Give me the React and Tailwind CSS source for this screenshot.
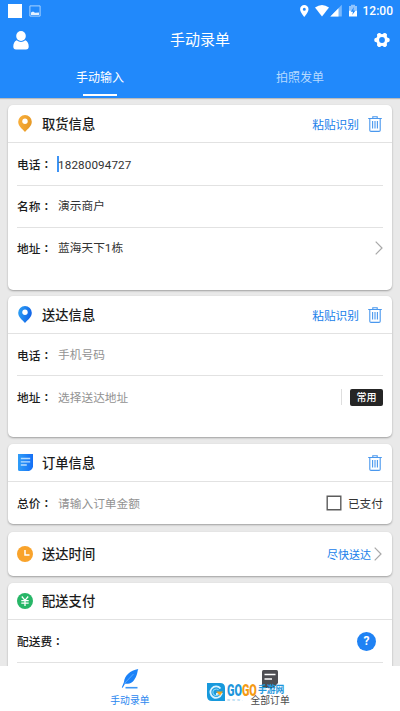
const TrashIcon = () => (
  <svg width="14" height="16" viewBox="0 0 14 16" fill="none" stroke="#4a98ee" strokeWidth="1.1">
    <path d="M.2 2.500h13.600M4.800 2.300V.7h4.400v1.600M1.800 3v11.200q0 1.200 1.200 1.200h8q1.200 0 1.200-1.200V3M4.600 5v7.500M7 5v7.500M9.400 5v7.500" />
  </svg>
);

const ChevronIcon = () => (
  <svg width="8" height="14" viewBox="0 0 8 14" fill="none" stroke="#a8a8a8" strokeWidth="1.2">
    <path d="M.7.7 7 7 .7 13.3" />
  </svg>
);

const PinIcon = ({ id, from, to }) => (
  <svg width="14" height="17" viewBox="0 0 14 17">
    <defs>
      <linearGradient id={id} x1="0" y1="0" x2="1" y2="0.3">
        <stop offset="0" stopColor={from} />
        <stop offset="1" stopColor={to} />
      </linearGradient>
    </defs>
    <path d="M7 0a6.8 6.8 0 0 0-6.8 6.8C.2 11 4 13.700 7 17c3-3.300 6.800-6 6.800-10.200A6.800 6.800 0 0 0 7 0z" fill={`url(#${id})`} />
    <circle cx="7" cy="6.300" r="2.700" fill="#fff" />
  </svg>
);

const OrderIcon = () => (
  <svg width="15" height="17" viewBox="0 0 15 17">
    <defs>
      <linearGradient id="order" x1="0" y1="0" x2="1" y2="0">
        <stop offset="0" stopColor="#2f9df8" />
        <stop offset="1" stopColor="#156ff5" />
      </linearGradient>
    </defs>
    <path d="M0 0h15v12.500q-.5 3-4 4.500H1.500Q0 17 0 15.500z" fill="url(#order)" />
    <path d="M2.800 4.500h9.400M2.800 7.800h9.400M2.800 11h6" stroke="#b9ddff" strokeWidth="1.300" />
  </svg>
);

const ClockIcon = () => (
  <svg width="16" height="16" viewBox="0 0 16 16">
    <circle cx="8" cy="8" r="8" fill="#f9a32b" />
    <path d="M8 4v5h4.500" fill="none" stroke="#fff" strokeWidth="1.500" />
  </svg>
);

const YuanIcon = () => (
  <svg width="16" height="16" viewBox="0 0 16 16">
    <circle cx="8" cy="8" r="8" fill="#27b667" />
    <path d="m4.800 3.500 3.200 3.800 3.200-3.800M4.300 7.700h7.400M4.300 10.200h7.400M8 7.300v5.700" fill="none" stroke="#fff" strokeWidth="1.300" />
  </svg>
);

const GearIcon = () => (
  <svg width="16" height="16" viewBox="0 0 16 16">
    <circle cx="8" cy="8" r="5.900" fill="#fff" />
    <g stroke="#fff" strokeWidth="4.600" strokeLinecap="round">
      <path d="M2.500 8h11" />
      <path d="m5.300 3.300 5.400 9.400" />
      <path d="m10.700 3.300-5.400 9.400" />
    </g>
    <circle cx="8" cy="8" r="2.900" fill="#2189fb" />
  </svg>
);

const UserIcon = () => (
  <svg width="16" height="19" viewBox="0 0 16 19" fill="#fff">
    <ellipse cx="8" cy="5" rx="4.800" ry="5" />
    <path d="M3.600 9.200Q8 12.800 12.400 9.200 15.700 11 15.700 15.500q0 3-2.700 3H3q-2.700 0-2.700-3Q.3 11 3.600 9.200z" />
  </svg>
);

const FeatherIcon = () => (
  <svg width="18" height="20" viewBox="0 0 18 20">
    <path d="M17.300 0C9 1.500 3.500 6.500 3 13L.8 18.600l.9.200L4 14.800c6 .4 8.500-2.300 10-5.300C16.500 6 16.300 2 17.300 0z" fill="#1b82f8" />
    <path d="M3.200 14.700 12.500 5" stroke="#8ac4ff" strokeWidth=".6" />
    <path d="M4.500 18.700h12" stroke="#3d97f5" strokeWidth="1.600" />
  </svg>
);

const AllOrdersIcon = () => (
  <svg width="16" height="18" viewBox="0 0 16 18">
    <path d="M1.500 0h13Q16 0 16 1.500V13l-4.500 5h-10Q0 18 0 16.500v-15Q0 0 1.500 0z" fill="#4d4d52" />
    <path d="M2.500 4.500h11M2.500 9h7.500" stroke="#fff" strokeWidth="1.600" />
  </svg>
);

const StatusIcons = () => (
  <svg width="60" height="14" viewBox="0 0 60 14" fill="#fff">
    <path fillRule="evenodd" d="M4.300 1A4.200 4.200 0 0 0 .1 5.200C.1 8.200 4.300 13 4.300 13s4.200-4.800 4.200-7.800A4.200 4.200 0 0 0 4.300 1zm0 2.700a1.500 1.500 0 1 1 0 3 1.500 1.500 0 0 1 0-3z" />
    <path d="M15 3.600q7-5 14 0l-7 8.900z" />
    <path d="M41.800.800V12.500H30.300z" opacity=".4" />
    <path d="M38.500 4.200v8.300h-8.200z" />
    <path d="M49 2h2V.7h4V2h2v4.500h-8z" opacity=".5" />
    <path d="M49 6.500h8v6h-8z" />
    <path d="m54 3-3.300 4.800H53L52.200 11l3.300-4.500h-2.200z" fill="#2189fb" />
  </svg>
);

const Card = ({ className, children }) => (
  <section className={`rounded-[5px] bg-white shadow-[0_1px_2px_rgba(0,0,0,0.32)] ${className}`}>
    {children}
  </section>
);

const CardHeader = ({ icon, title, className = "h-[38px] border-b", children }) => (
  <div className={`flex items-center border-[#e2e2e2] pr-2.5 pl-[9px] ${className}`}>
    <span className="flex w-4 justify-center">{icon}</span>
    <h2 className="ml-[9px] flex-1 text-[13.3px] font-medium text-[#1c1c1c]">{title}</h2>
    {children}
  </div>
);

const Row = ({ label, value, placeholder, cursor, className = "", children }) => (
  <div className={`mx-[9px] flex items-center border-[#e2e2e2] text-[11.7px] ${className}`}>
    <span className="font-medium text-[#1c1c1c]">
      {label}
      <span className="font-['Noto_Sans_CJK_TC',sans-serif]">：</span>
    </span>
    {cursor && <span className="-mr-px ml-[5px] h-4 w-[1.5px] bg-[#3d93f5]" />}
    <span
      className={`flex-1 pt-[3px] font-['Roboto','Noto_Sans_CJK_SC',sans-serif] ${cursor ? "pl-[0.5px] tracking-[0.1px]" : "ml-1.5"} ${placeholder ? "text-[#929292]" : "text-[#333]"}`}
    >
      {value || placeholder}
    </span>
    {children}
  </div>
);

const PasteAction = () => (
  <span className="mr-[9px] text-[11.7px] text-[#2080ea]">粘贴识别</span>
);

export default function App() {
  return (
    <div className="relative flex h-[711px] w-[400px] flex-col overflow-hidden bg-[#e9e9e9] font-['Noto_Sans_CJK_SC',sans-serif] leading-none">
      <header className="h-[98px] shrink-0 bg-[#2189fb] text-white shadow-[0_1px_1px_rgba(0,0,0,0.2)]">
        <div className="flex h-[22px] items-center pr-[7px] pl-2">
          <span className="h-3.5 w-3.5 bg-white" />
          <svg className="ml-[7px]" width="12" height="12" viewBox="0 0 12 12">
            <path d="M.9.9h10.200v10.200H.9z" fill="none" stroke="#a9d3ff" strokeWidth="1" />
            <path d="M2 10V7.500l2-1 2 1.300 4-.3V10z" fill="#e2f1ff" />
          </svg>
          <div className="ml-auto flex items-center">
            <StatusIcons />
            <span className="ml-[3px] font-['Roboto',sans-serif] text-[12px] font-medium">12:00</span>
          </div>
        </div>
        <div className="flex h-9 items-center justify-between pr-2.5 pl-[13px]">
          <UserIcon />
          <h1 className="mr-[3px] pb-[3px] text-[15px]">手动录单</h1>
          <GearIcon />
        </div>
        <div className="flex h-[38px] text-[12px]">
          <div className="flex flex-1 flex-col items-center justify-between">
            <span className="pt-[13px]">手动输入</span>
            <span className="h-0.5 w-[34px] bg-white" />
          </div>
          <div className="flex flex-1 justify-center pt-[13px] text-[#b5d9ff]">拍照发单</div>
        </div>
      </header>

      <main className="flex min-h-0 flex-1 flex-col overflow-hidden px-2 pt-[7px]">
        <Card className="h-[185px] shrink-0">
          <CardHeader icon={<PinIcon id="pickup" from="#fbb03b" to="#e79a27" />} title="取货信息">
            <PasteAction />
            <TrashIcon />
          </CardHeader>
          <Row label="电话" value="18280094727" cursor className="h-[43px] border-b" />
          <Row label="名称" value="演示商户" className="h-[42px] border-b pb-0.5" />
          <Row label="地址" value="蓝海天下1栋" className="h-[41px] pb-0.5">
            <ChevronIcon />
          </Row>
        </Card>

        <Card className="mt-1.5 h-[141px] shrink-0">
          <CardHeader icon={<PinIcon id="dropoff" from="#2fa4f5" to="#1266e8" />} title="送达信息">
            <PasteAction />
            <TrashIcon />
          </CardHeader>
          <Row label="电话" placeholder="手机号码" className="h-[42px] border-b" />
          <Row label="地址" placeholder="选择送达地址" className="h-[42px]">
            <span className="h-4 w-px bg-[#dedede]" />
            <span className="ml-2 flex h-[17px] w-[33px] items-center justify-center rounded-xs bg-[#252525] text-[10px] font-medium text-white">
              常用
            </span>
          </Row>
        </Card>

        <Card className="mt-[7px] h-20 shrink-0">
          <CardHeader icon={<OrderIcon />} title="订单信息">
            <TrashIcon />
          </CardHeader>
          <Row label="总价" placeholder="请输入订单金额" className="h-[42px]">
            <svg width="16" height="16" viewBox="0 0 16 16">
              <path d="M1.200 1.200h13.600v13.600H1.200z" fill="none" stroke="#5c5c5c" strokeWidth="1.400" />
            </svg>
            <span className="ml-1.5 text-[#333]">已支付</span>
          </Row>
        </Card>

        <Card className="mt-2 h-11 shrink-0">
          <CardHeader icon={<ClockIcon />} title="送达时间" className="h-11">
            <span className="mr-[3px] text-[11px] text-[#2080ea]">尽快送达</span>
            <ChevronIcon />
          </CardHeader>
        </Card>

        <Card className="mt-[7px] h-[120px] shrink-0">
          <CardHeader icon={<YuanIcon />} title="配送支付" className="h-[37px] border-b" />
          <Row label="配送费" value="" className="h-[43px] border-b">
            <span className="mr-[7px] flex h-[19px] w-[19px] items-center justify-center rounded-full bg-[#1f82f4] font-['Roboto',sans-serif] text-[12px] font-bold text-white">
              ?
            </span>
          </Row>
        </Card>
      </main>

      <nav className="flex h-[45px] shrink-0 justify-center gap-[101px] bg-white pt-[3px] text-[9.800px]">
        <div className="flex flex-col items-center gap-[7px] text-[#2b87ef]">
          <FeatherIcon />
          <span>手动录单</span>
        </div>
        <div className="flex flex-col items-center gap-2 pt-px text-[#4a4a4a]">
          <AllOrdersIcon />
          <span>全部订单</span>
        </div>
      </nav>

      {/* site badge floating over the nav bar */}
      <div className="absolute top-[683px] left-[207px] flex">
        <svg width="18" height="18" viewBox="0 0 18 18">
          <path d="M0 0h13q5 0 5 5v13H5q-5 0-5-5z" fill="#1799dc" />
          <path d="M13.500 5.500A5.700 5.700 0 1 0 14.500 11H9" fill="none" stroke="#d9f2ff" strokeWidth="1.800" />
          <path d="M11.500 7A3.300 3.300 0 1 0 12 11" fill="none" stroke="#7fd0f5" strokeWidth="1.200" />
          <path d="M9 8.500h7l-3 4z" fill="#f5a21b" />
        </svg>
        <div className="ml-0.5">
          <div className="flex h-[15px] items-center">
            <div className="w-[31px]">
              <div className="flex w-max origin-left scale-x-[0.68] font-['Roboto',sans-serif] text-[16px] font-black">
                <span className="text-[#1e96dc]">GO</span>
                <span className="text-[#f59a12]">GO</span>
              </div>
            </div>
            <span className="scale-y-[1.15] text-[8.800px] font-bold text-[#1e96dc]">手游网</span>
          </div>
          <div className="font-['Roboto',sans-serif] text-[4px] leading-[4px] tracking-[2px] text-[#7cc0ea]">www.</div>
        </div>
      </div>
    </div>
  );
}
